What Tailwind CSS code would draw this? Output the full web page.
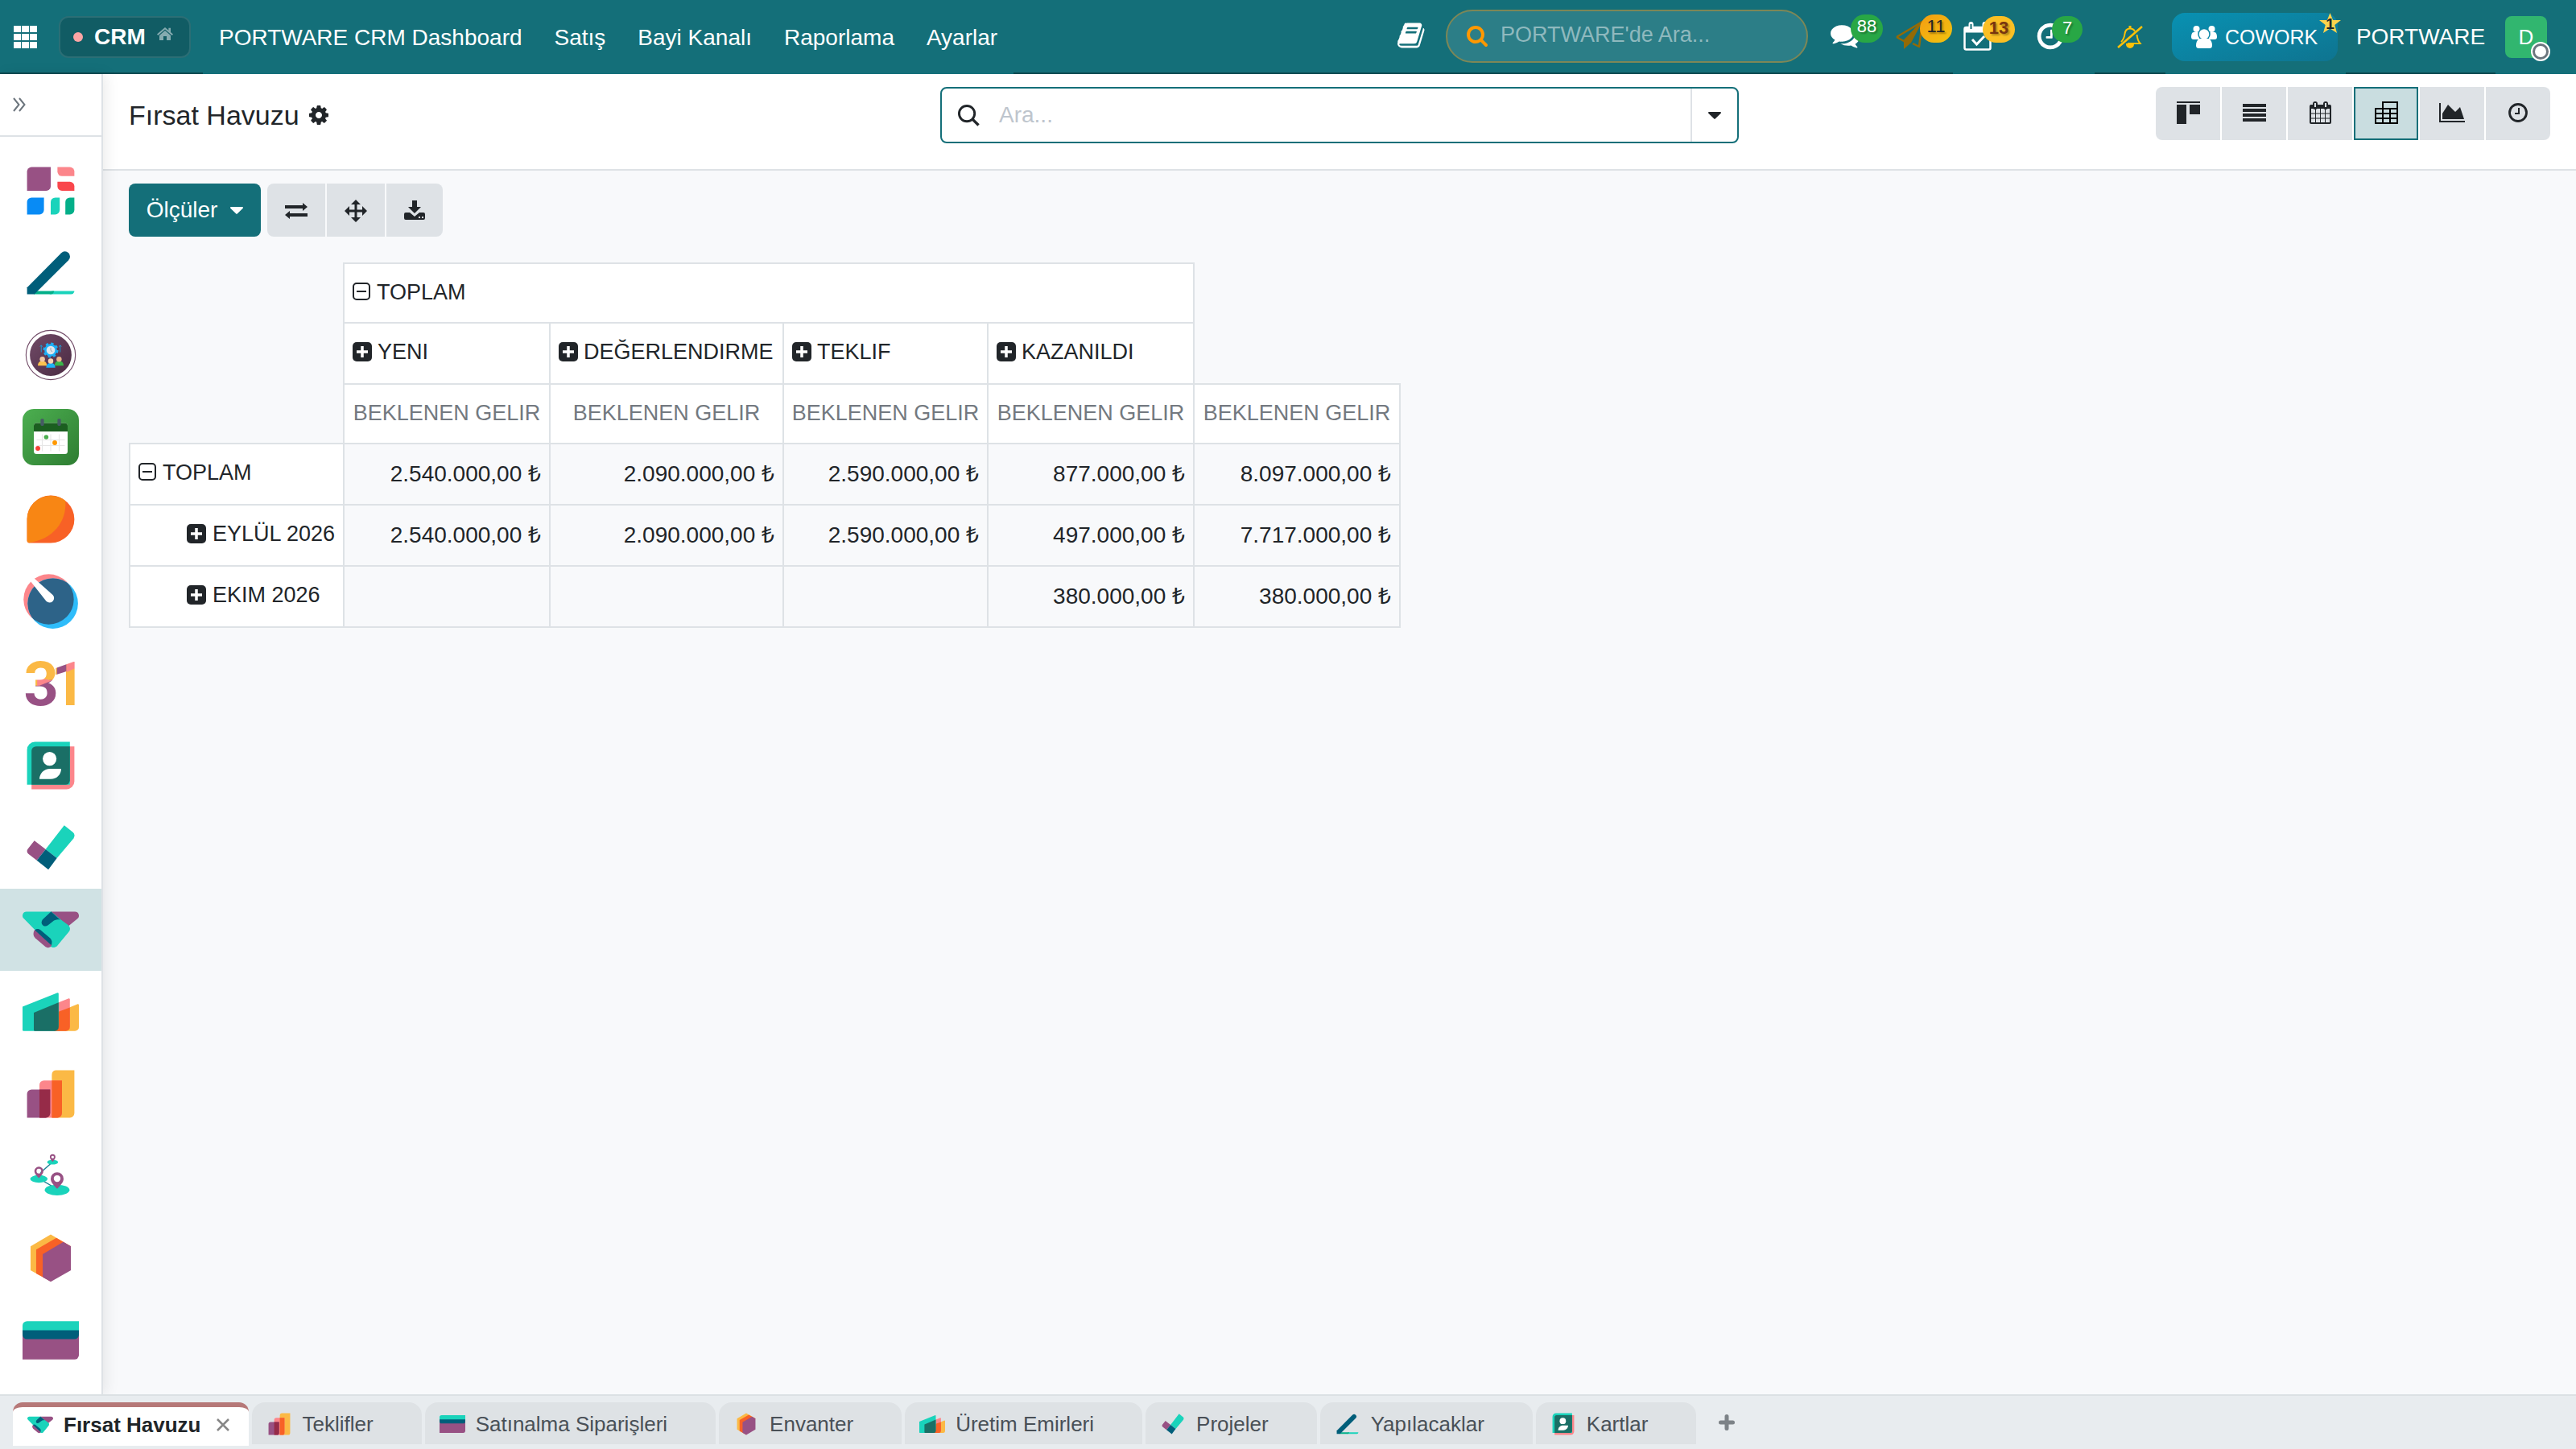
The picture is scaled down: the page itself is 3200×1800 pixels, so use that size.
<!DOCTYPE html>
<html lang="tr">
<head>
    <meta charset="UTF-8">
    <meta name="viewport" content="width=device-width, initial-scale=1.0">
    <title>Fırsat Havuzu - PORTWARE CRM</title>
    <script src="https://cdn.jsdelivr.net/npm/@tailwindcss/browser@4"></script>
    <style>
        body { font-family: 'Liberation Sans', Arial, sans-serif; }
    </style>
</head>
<body class="h-screen flex flex-col overflow-hidden bg-[#f8f9fb] text-[28px] leading-[42px] text-[#212529]">

    <!-- Icon sprite -->
    <svg class="absolute size-0" aria-hidden="true">
        <defs>
            <linearGradient id="g-green" x1="0" y1="0" x2="1" y2="1"><stop offset="0" stop-color="#4caf50"/><stop offset="1" stop-color="#2e7d32"/></linearGradient>
            <linearGradient id="g-plum" x1="0" y1="0" x2="1" y2="1"><stop offset="0" stop-color="#714b67"/><stop offset="1" stop-color="#4a2a42"/></linearGradient>
            <clipPath id="c-disc"><circle cx="23.200" cy="23.200" r="22.300"/></clipPath>
        </defs>
        <symbol id="app-dashboard" viewBox="0 0 50 50">
            <path fill="#985184" d="M8 4h17v17a4 4 0 0 1-4 4H4V8a4 4 0 0 1 4-4z"/>
            <path fill="#fc868b" d="M31 4h11a4 4 0 0 1 4 4v4H35a4 4 0 0 1-4-4z"/>
            <path fill="#f9464c" d="M31 17h11a4 4 0 0 1 4 4v4H35a4 4 0 0 1-4-4z"/>
            <path fill="#088bf5" d="M8 31h11v11a4 4 0 0 1-4 4H4V35a4 4 0 0 1 4-4z"/>
            <path fill="#1ad3bb" d="M29 31h4v11a4 4 0 0 1-4 4h-4V35a4 4 0 0 1 4-4z"/>
            <path fill="#03af89" d="M42 31h4v11a4 4 0 0 1-4 4h-4V35a4 4 0 0 1 4-4z"/>
        </symbol>
        <symbol id="app-todo" viewBox="0 0 50 50">
            <path fill="#1ad3bb" d="M26 41h20a3 3 0 0 1-3 3H24z"/>
            <path fill="#03af89" d="M10 41h18a3 3 0 0 1-3 3H10z"/>
            <path fill="#005e7a" d="M4 38 34.400 7.300a4.500 4.500 0 0 1 6.400 6.400L10.500 44H4z"/>
        </symbol>
        <symbol id="app-team" viewBox="0 0 50 50">
            <circle cx="25" cy="25" r="21.900" fill="#fff" stroke="#714b67" stroke-width=".8"/>
            <circle cx="25" cy="25" r="18.500" fill="url(#g-plum)"/>
            <circle cx="25" cy="20.700" r="5.600" fill="#1cb0f6"/>
            <circle cx="25" cy="20.700" r="6" fill="none" stroke="#1cb0f6" stroke-width="1.600" stroke-dasharray="2.400 2.300"/>
            <circle cx="25" cy="20.700" r="3.800" fill="#dfe6ec"/>
            <path d="M25 18.500v2.400l1.500 1.200" fill="none" stroke="#8b98a5" stroke-width=".6"/>
            <path d="M16.600 22.500v-6M15.600 17.600l1-1.300 1 1.300M33.400 22.500v-6M32.400 17.600l1-1.300 1 1.300" fill="none" stroke="#1c9fd8" stroke-width=".7"/>
            <path fill="#fcc34f" d="M13.600 34.500c0-3 1.600-4.200 4-4.200s4 1.200 4 4.200z"/>
            <path fill="#39b54a" d="M28.400 34.500c0-3 1.600-4.200 4-4.200s4 1.200 4 4.200z"/>
            <path fill="#1cb0f6" d="M21 36.300c0-3 1.600-4.200 4-4.200s4 1.200 4 4.200z"/>
            <circle cx="17.600" cy="28.800" r="2.300" fill="#f2c9a5"/>
            <circle cx="32.400" cy="28.800" r="2.300" fill="#e8b48c"/>
            <circle cx="25" cy="30.400" r="2.300" fill="#f7d3b5"/>
        </symbol>
        <symbol id="app-planner" viewBox="0 0 50 50">
            <rect width="50" height="50" rx="10" fill="url(#g-green)"/>
            <rect x="10" y="12.500" width="30" height="27.500" rx="2.500" fill="#fff"/>
            <path fill="#1b5e20" d="M12.500 12.500h25a2.500 2.500 0 0 1 2.500 2.500v5H10v-5a2.500 2.500 0 0 1 2.500-2.500z"/>
            <path d="M12.500 27.500h25M12.500 32.500h25M17.500 22.500v15M25 22.500v15M32.500 22.500v15" stroke="#e6e6e6" stroke-width=".8"/>
            <rect x="16" y="8.800" width="3" height="6.200" rx="1" fill="#455a64"/>
            <rect x="31" y="8.800" width="3" height="6.200" rx="1" fill="#455a64"/>
            <circle cx="21" cy="25" r="2" fill="#4caf50"/>
            <circle cx="28.600" cy="30" r="2.100" fill="#ff9800"/>
            <circle cx="13.600" cy="35" r="2.100" fill="#f44336"/>
        </symbol>
        <symbol id="app-discuss" viewBox="0 0 50 50">
            <path fill="#f86126" d="M4 25a21 21 0 1 1 21 21H6a2 2 0 0 1-2-2z"/>
            <path fill="#f88614" d="M38 8.600A21 21 0 0 0 4 25v19a2 2 0 0 0 1.700 1.900C27 43 39.500 27 38 8.600z"/>
        </symbol>
        <symbol id="app-timesheet" viewBox="0 0 50 50">
            <circle cx="23.200" cy="23.200" r="22.300" fill="#fc868b"/>
            <circle cx="26.900" cy="26.900" r="22.300" fill="#2ebcfa"/>
            <g clip-path="url(#c-disc)"><circle cx="26.900" cy="26.900" r="22.300" fill="#2d6388"/></g>
            <path fill="#fff" d="M6.500 6.500 10 4.200 26.800 19.200a4 4 0 0 1-5.800 5.700z"/>
        </symbol>
        <symbol id="app-contacts" viewBox="0 0 50 50">
            <path fill="#fc868b" d="M8 8h38v31a7 7 0 0 1-7 7H8z"/>
            <path fill="#1ad3bb" d="M11 4h31v38H4V11a7 7 0 0 1 7-7z"/>
            <path fill="#1a6f66" d="M12 8h30v30a4 4 0 0 1-4 4H8V12a4 4 0 0 1 4-4z"/>
            <circle cx="24" cy="19" r="6.100" fill="#fff"/>
            <path fill="#fff" d="M15 37c0-5 4-9.200 9.500-9.200h9.800c0 5-4 9.200-9.300 9.200z"/>
        </symbol>
        <symbol id="app-project" viewBox="0 0 50 50">
            <path fill="#1ad3bb" d="M37 5.200 44.600 11.200a4 4 0 0 1 .7 5.500L30.500 34.300 20.500 26.400z"/>
            <path fill="#985184" d="M10.500 18.800 20.500 26.400 12.600 36.200 5.200 30.500a3 3 0 0 1-.6-4.200z"/>
            <path fill="#005e7a" d="M20.500 26.400 30.500 34.300 22.900 44.500 12.600 36.200z"/>
        </symbol>
        <symbol id="app-crm" viewBox="0 0 50 50">
            <path fill="#985184" d="M25 9h21.500a3.500 3.500 0 0 1 2.200 6.200L38 24 28 20z"/>
            <path fill="#1ad3bb" d="M3.500 9H25.500L34 16 40.300 20.700a4 4 0 0 1 0 6.200L30.500 39.500a4.500 4.500 0 0 1-5.500 0L1.300 15.200A3.500 3.500 0 0 1 3.500 9z"/>
            <path fill="#1ad3bb" d="M20 38 31 14l9.500 7a4 4 0 0 1 .2 6.300L30.300 39.700a5 5 0 0 1-5.300.3z"/>
            <path fill="#005e7a" d="M25.300 9 33.500 16.200c-3-.8-5 .1-6.500 1.300l-4.600 3.600c-3 2.300-7.500-1.100-4.600-5.200z"/>
            <path fill="#985184" d="M10.900 25 26 38.300c-.5 2.600-3.500 3.400-6 1.500l-8.800-7.500c-2-2-2-5-.3-7.300z"/>
            <path fill="#005e7a" d="M10.900 25.300c1.600-1.500 3.800-1.200 5.200 0l8.500 7.200c1.600 1.600 2 4.200.8 6.100z"/>
        </symbol>
        <symbol id="app-mrp" viewBox="0 0 50 50">
            <path fill="#fbb945" d="M32 25 49 18a1 1 0 0 1 1 1v19.500a3.500 3.500 0 0 1-3.500 3.500H32z"/>
            <path fill="#fc868b" d="M32 16.600 41 13a1 1 0 0 1 1 1v24.500H32z"/>
            <path fill="#f86126" d="M32 24.800 42 21v17.500a3.500 3.500 0 0 1-3.500 3.500H30z"/>
            <path fill="#1ad3bb" d="M0 20.400 31 8a1 1 0 0 1 1 1v33H1a1 1 0 0 1-1-1z"/>
            <path fill="#f86126" d="M28 42h5v-6z"/>
            <path fill="#1a6f66" d="M10 25.700 32 16.600v21.900a3.500 3.500 0 0 1-3.500 3.500H11a1 1 0 0 1-1-1z"/>
        </symbol>
        <symbol id="app-sales" viewBox="0 0 50 50">
            <path fill="#fbb945" d="M29.500 4H46v38a4 4 0 0 1-4 4H26V8a4 4 0 0 1 3.500-4z"/>
            <path fill="#fc868b" d="M19 13h16v29a4 4 0 0 1-4 4H15V17a4 4 0 0 1 4-4z"/>
            <path fill="#f86126" d="M26 13h9v29a4 4 0 0 1-4 4h-5z"/>
            <path fill="#985184" d="M8 21h16.500v21a4 4 0 0 1-4 4H4V25a4 4 0 0 1 4-4z"/>
            <path fill="#962b48" d="M15 21h9.500v21a4 4 0 0 1-4 4H15z"/>
        </symbol>
        <symbol id="app-map" viewBox="0 0 50 50">
            <path d="M26 13 16 22M16 28l12 7" stroke="#1b7f93" stroke-width="1"/>
            <ellipse cx="26.700" cy="12.600" rx="4.800" ry="2.100" fill="#1ad3bb"/>
            <ellipse cx="14.500" cy="27.500" rx="7.700" ry="3.400" fill="#1ad3bb"/>
            <ellipse cx="30.700" cy="37.400" rx="11" ry="4.800" fill="#1ad3bb"/>
            <path fill="#985184" fill-rule="evenodd" d="M26.700 12.400C25 10.400 24.200 9.300 24.200 8.100a2.500 2.500 0 0 1 5 0c0 1.200-.8 2.300-2.500 4.300zm0-3.100a1.200 1.200 0 1 0 0-2.400 1.200 1.200 0 0 0 0 2.400z"/>
            <path fill="#985184" fill-rule="evenodd" d="M14.500 26.800c-2.600-2.600-4-4.400-4-6.200a4 4 0 0 1 8 0c0 1.800-1.400 3.600-4 6.200zm0-4.200a2.100 2.100 0 1 0 0-4.200 2.100 2.100 0 0 0 0 4.200z"/>
            <path fill="#985184" fill-rule="evenodd" d="M30.700 36.200c-3.600-3.600-5.700-6-5.700-8.900a5.700 5.700 0 0 1 11.400 0c0 2.900-2.100 5.300-5.700 8.900zm0-6a3 3 0 1 0 0-6 3 3 0 0 0 0 6z"/>
        </symbol>
        <symbol id="app-stock" viewBox="0 0 50 50">
            <path fill="#fbb945" d="M25 4 42.900 14.400 25 45.600 7.100 35.700V14.400z"/>
            <path fill="#f86126" d="M30 7 42.900 14.400 25 45.600 12.100 38.500V17.300z"/>
            <path fill="#985184" d="M36.200 10.600 42.900 14.400V35.700L25 45.900 17.900 41.700V21.400z"/>
        </symbol>
        <symbol id="app-purchase" viewBox="0 0 50 50">
            <path fill="#985184" d="M0 16h50v22a4 4 0 0 1-4 4H0z"/>
            <path fill="#1ad3bb" d="M4 8h46v9H0v-5a4 4 0 0 1 4-4z"/>
            <path fill="#005e7a" d="M0 16h50v4a4 4 0 0 1-4 4H4a4 4 0 0 1-4-4z"/>
        </symbol>

        <symbol id="i-search" viewBox="0 0 28 28"><circle cx="11.500" cy="11.500" r="10" fill="none" stroke="currentColor" stroke-width="3"/><path d="m18.500 18.500 8 8" stroke="currentColor" stroke-width="3.500"/></symbol>
        <symbol id="i-search-bold" viewBox="0 0 1664 1664"><path fill="currentColor" d="M1152 704q0-185-131.500-316.500t-316.500-131.500-316.500 131.500-131.500 316.500 131.500 316.500 316.500 131.500 316.500-131.500 131.500-316.500zm512 832q0 52-38 90t-90 38q-54 0-90-38l-343-342q-179 124-399 124-143 0-273.500-55.500t-225-150-150-225-55.500-273.500 55.500-273.500 150-225 225-150 273.500-55.500 273.500 55.500 225 150 150 225 55.500 273.500q0 220-124 399l343 343q37 37 37 90z"/></symbol>
        <symbol id="i-caret" viewBox="0 0 16 9"><path fill="currentColor" d="M1 0h14a1 1 0 0 1 .7 1.700L8.700 8.600a1 1 0 0 1-1.400 0L.3 1.700A1 1 0 0 1 1 0z"/></symbol>
        <symbol id="i-plus" viewBox="0 0 24 24"><rect width="24" height="24" rx="5" fill="currentColor"/><path d="M12 5v14M5 12h14" stroke="#fff" stroke-width="3.500"/></symbol>
        <symbol id="i-minus" viewBox="0 0 22 22"><rect x="1" y="1" width="20" height="20" rx="4" fill="none" stroke="currentColor" stroke-width="2"/><path d="M5 11h12" stroke="currentColor" stroke-width="2"/></symbol>
    </svg>

    <!-- Top bar -->
    <header class="flex h-[92px] shrink-0 bg-[#146f79] text-white">
        <div class="flex items-center w-[252px] pl-[17px] gap-[27px] pt-[2px] border-b-2 border-[#0e4b52]">
            <button aria-label="Uygulamalar">
                <svg class="block w-[29px] h-7" viewBox="0 0 29 28" fill="#fff"><path d="M0 0h9v8H0zM10 0h9v8h-9zM20 0h9v8h-9zM0 10h9v8H0zM10 10h9v8h-9zM20 10h9v8h-9zM0 20h9v8H0zM10 20h9v8h-9zM20 20h9v8h-9z"/></svg>
            </button>
            <a href="#" class="flex items-center w-[164px] h-[52px] pl-4 gap-[14px] rounded-xl border-2 border-[#2b6e75] bg-[#115c64] font-bold">
                <span class="size-3 rounded-full bg-[#fca5a5]"></span>
                <span>CRM</span>
                <svg class="w-5 h-4 mb-2" viewBox="0 0 20 16" fill="#85abb0"><path d="M10 0 0 8.500l1.300 1.500L10 2.600l8.700 7.400L20 8.500l-3-2.600V.8h-2.600v2.900z"/><path d="M10 4 3 10v6h5v-5h4v5h5v-6z"/></svg>
            </a>
        </div>
        <nav class="flex items-center pt-[2px]">
            <a href="#" class="px-5">PORTWARE CRM Dashboard</a>
            <a href="#" class="px-5">Satış</a>
            <a href="#" class="px-5">Bayi Kanalı</a>
            <a href="#" class="px-5">Raporlama</a>
            <a href="#" class="px-5">Ayarlar</a>
        </nav>
        <div class="flex flex-1 justify-end pr-[36px] border-b-2 border-[#0e4b52]">
            <button class="mr-6 pb-[2px]" aria-label="Bilgi Bankası">
                <svg class="block w-9 h-9" viewBox="0 0 1792 1792" fill="#fff"><path d="M1639 478q40 57 18 129l-275 906q-19 64-76.500 107.500t-122.500 43.500h-923q-77 0-148.500-53.500t-99.500-131.500q-24-67-2-127 0-4 3-27t4-37q1-8-3-21.500t-3-19.500q2-11 8-21t16.500-23.500 16.500-23.500q23-38 45-91.500t30-91.500q3-10 .5-30t-.5-28q3-11 17-28t17-23q21-36 42-92t25-90q1-9-2.500-32t.5-28q4-13 22-30.500t22-22.500q19-26 42.500-84.500t27.500-96.500q1-8-3-25.500t-2-26.500q2-8 9-18t18-23 17-21q8-12 16.500-30.500t15-35 16-36 19.500-32 26.500-23.500 36-11.500 47.500 5.500l-1 3q38-9 51-9h761q74 0 114 56t18 130l-274 906q-36 119-71.500 153.500t-128.500 34.500h-869q-27 0-38 15-11 16-1 43 24 70 144 70h923q29 0 56-15.500t35-41.500l300-987q7-22 5-57 38 15 59 43zm-1064 2q-4 13 2 22.500t20 9.500h608q13 0 25.500-9.500t16.500-22.500l21-64q4-13-2-22.500t-20-9.500h-608q-13 0-25.500 9.500t-16.500 22.500zm-83 256q-4 13 2 22.500t20 9.500h608q13 0 25.500-9.500t16.500-22.500l21-64q4-13-2-22.500t-20-9.500h-608q-13 0-25.500 9.500t-16.500 22.500z"/></svg>
            </button>
            <label class="flex items-center self-center w-[450px] h-[66px] px-6 gap-4 rounded-[33px] border-2 border-[#7d8757] bg-[#2c7e87]">
                <svg class="size-[26px] text-[#ff9800]"><use href="#i-search-bold"/></svg>
                <input type="text" placeholder="PORTWARE'de Ara..." class="flex-1 min-w-0 pb-1 bg-transparent text-[27px] placeholder:text-[#8fb9be] outline-none" aria-label="Genel arama">
            </label>
            <button class="relative ml-[28px] w-9 pb-[2px]" aria-label="Mesajlar">
                <svg class="block w-9 h-9" viewBox="0 0 1792 1792" fill="#fff"><path d="M1408 768q0 139-94 257t-256.500 186.500-353.500 68.500q-86 0-176-16-124 88-278 128-36 9-86 16h-3q-11 0-20.500-8t-11.500-21q-1-3-1-6.500t.5-6.500 2-6l2.500-5 3.500-5.500 4-5 4.500-5 4-4.500q5-6 23-25t26-29.500 22.500-29 25-38.500 20.500-44q-124-72-195-177t-71-224q0-139 94-257t256.500-186.500 353.500-68.500 353.500 68.500 256.500 186.500 94 257zm384 256q0 120-71 224.500t-195 176.500q10 24 20.500 44t25 38.500 22.500 29 26 29.500 23 25q1 1 4 4.500t4.500 5 4 5 3.500 5.500l2.500 5 2 6 .5 6.500-1 6.500q-3 14-13 22t-22 7q-50-7-86-16-154-40-278-128-90 16-176 16-271 0-472-132 58 4 88 4 161 0 309-45t264-129q125-92 192-212t67-254q0-77-23-152 129 71 204 178t75 230z"/></svg>
                <span class="absolute left-[25px] top-[18px] w-10 h-[35px] rounded-full bg-[#28a745] text-[22px] leading-[30px] text-shadow-[2px_2px_2px_rgba(0,0,0,0.3)]">88</span>
            </button>
            <button class="relative ml-[44px] w-9 pb-[2px]" aria-label="Gönderiler">
                <svg class="block w-9 h-9" viewBox="0 0 36 36" fill="none"><path d="M2 20 34 1 30 32 22 28" stroke="#946a05" stroke-width="2.500" stroke-linejoin="round"/><path d="M2 20 11 25 34 1" stroke="#946a05" stroke-width="2.500" stroke-linejoin="round"/><path d="M34 1 11 25v10l9-8z" fill="#946a05"/></svg>
                <span class="absolute left-[31px] top-[18px] w-10 h-[35px] rounded-full bg-linear-to-br from-[#f39c12] to-[#f1c40f] text-[22px] leading-[30px] text-[#212529] text-shadow-[2px_2px_2px_rgba(0,0,0,0.3)]">11</span>
            </button>
        </div>
        <div class="flex w-[176px]">
            <button class="relative w-[92px] pl-[13px] pb-[2px]" aria-label="Takvim">
                <svg class="block w-9 h-9" viewBox="0 0 36 36" fill="none" stroke="#fff"><rect x="1.500" y="7" width="32" height="27.500" rx="2" stroke-width="2.500"/><path d="M2 7h31v6H2z" fill="#fff"/><path d="M9.500 3v6M26.500 3v6" stroke-width="6" stroke-linecap="round"/><path d="M9.500 3v6M26.500 3v6" stroke="#146f79" stroke-width="2"/><path d="m11 22 5.500 6L26 18" stroke-width="3"/></svg>
                <span class="absolute left-[37px] top-5 w-10 h-[33px] rounded-full bg-[#fbbf24] text-[22px] leading-[30px] font-bold text-[#78350f] text-shadow-[2px_2px_2px_rgba(0,0,0,0.3)]">13</span>
            </button>
            <button class="relative w-[84px] pl-[10px] pb-[2px]" aria-label="Aktiviteler">
                <svg class="block w-[38px] h-[38px]" viewBox="0 0 1792 1792" fill="#fff"><path d="M1024 544v448q0 14-9 23t-23 9h-320q-14 0-23-9t-9-23v-64q0-14 9-23t23-9h224v-352q0-14 9-23t23-9h64q14 0 23 9t9 23zm416 352q0-148-73-273t-198-198-273-73-273 73-198 198-73 273 73 273 198 198 273 73 273-73 198-198 73-273zm224 0q0 209-103 385.500t-279.500 279.500-385.500 103-385.500-103-279.500-279.500-103-385.500 103-385.500 279.500-279.500 385.500-103 385.500 103 279.500 279.500 103 385.500z"/></svg>
                <span class="absolute left-[31px] top-5 w-[38px] h-[33px] rounded-full bg-[#28a745] text-[22px] leading-[30px] text-shadow-[2px_2px_2px_rgba(0,0,0,0.3)]">7</span>
            </button>
        </div>
        <button class="flex items-center justify-center w-[88px] pt-[2px] border-b-2 border-[#0e4b52]" aria-label="Bildirimler kapalı">
            <svg class="w-8 h-7" viewBox="0 0 32 28" fill="none" stroke="#ffc107" stroke-width="2"><path d="M5 20c3-3 4-6 4.500-10C10 6 12.500 3.500 16 3.500c3 0 5 1.300 6 3.500M24.500 11c.4 4.500 1.500 8 4 11H13"/><path d="M16 0v3" stroke-width="3"/><path d="M1 27 31 1" stroke-width="2.500"/><path d="M12 23a4 4 0 0 0 8 0z" fill="#ffc107"/></svg>
        </button>
        <div class="flex items-center w-[224px] pl-2">
            <button class="relative flex items-center w-[206px] h-[60px] pl-6 gap-[10px] rounded-2xl bg-linear-to-br from-[#0891b2] to-[#0e7490] text-[25px]">
                <svg class="w-8 h-7" viewBox="0 0 32 28" fill="#fff"><circle cx="6.500" cy="4" r="4"/><circle cx="25.500" cy="4" r="4"/><path d="M3 8h7v9H3a3 3 0 0 1-3-3c0-3 1-6 3-6zM29 8h-7v9h7a3 3 0 0 0 3-3c0-3-1-6-3-6z"/><circle cx="16" cy="10.500" r="7" stroke="#0b87a7" stroke-width="1.500"/><path d="M10 16h12c3 2 4 5 4 8.500a3.500 3.500 0 0 1-3.500 3.500h-13A3.500 3.500 0 0 1 6 24.500C6 21 7 18 10 16z"/></svg>
                COWORK
                <span class="absolute left-[183px] top-0 w-[27px] h-[27px]">
                    <svg class="w-[27px] h-[27px]" viewBox="0 0 27 27" fill="#fcd34d"><path d="m13.500 0 3.600 9H27l-7.700 6 2.700 10-8.500-5.600L5 25l2.700-10L0 9h9.900z"/></svg>
                    <span class="absolute inset-0 text-[19px] leading-[28px] font-bold text-[#212529] text-center">1</span>
                </span>
            </button>
        </div>
        <button class="w-[186px] pt-[2px] border-b-2 border-[#0e4b52]">PORTWARE</button>
        <div class="flex items-center w-[100px] pl-3">
            <button class="relative size-[52px] rounded-lg bg-[#31b66f] text-[26px]">D
                <span class="absolute left-8 top-8 size-6 rounded-full border-2 border-white bg-[#6c757d] p-[3px]"><span class="block size-full rounded-full bg-white"></span></span>
            </button>
        </div>
    </header>

    <div class="flex flex-1 min-h-0">
        <!-- App sidebar -->
        <aside class="relative z-10 w-[128px] shrink-0 border-r-2 border-[#dee2e6] bg-white shadow-[4px_0_16px_rgba(0,0,0,0.08)]">
            <button class="flex items-center w-full h-[78px] pl-4 border-b-2 border-[#dee2e6]" aria-label="Genişlet">
                <svg class="w-4 h-[18px]" viewBox="0 0 16 18" fill="none" stroke="#6c757d" stroke-width="2"><path d="m1 1 6.500 8L1 17M8 1l6.500 8L8 17"/></svg>
            </button>
            <nav class="flex flex-col pt-4">
                <a href="#" class="flex items-center justify-center h-[102px]" aria-label="Panolar"><svg class="size-[70px]"><use href="#app-dashboard"/></svg></a>
                <a href="#" class="flex items-center justify-center h-[102px]" aria-label="Yapılacaklar"><svg class="size-[70px]"><use href="#app-todo"/></svg></a>
                <a href="#" class="flex items-center justify-center h-[102px]" aria-label="Ekip"><svg class="size-[70px]"><use href="#app-team"/></svg></a>
                <a href="#" class="flex items-center justify-center h-[102px]" aria-label="Planlayıcı"><svg class="size-[70px]"><use href="#app-planner"/></svg></a>
                <a href="#" class="flex items-center justify-center h-[102px]" aria-label="Mesajlaşma"><svg class="size-[70px]"><use href="#app-discuss"/></svg></a>
                <a href="#" class="flex items-center justify-center h-[102px]" aria-label="Zaman Çizelgesi"><svg class="size-[70px]"><use href="#app-timesheet"/></svg></a>
                <a href="#" class="flex items-center justify-center h-[102px]" aria-label="Takvim">
                    <svg class="size-[70px]" viewBox="0 0 50 50">
                        <pattern id="p-calendar" width="60" height="60" patternUnits="userSpaceOnUse">
                            <rect width="60" height="60" fill="#fbb945"/>
                            <path fill="#985184" d="M0 27h13l11-5h6v28H0z"/>
                            <path fill="#fc868b" d="M13 21h7l6 1.500-11 4.500h-2z"/>
                            <path fill="#985184" d="M30.500 0H39v14l-8.500 6z"/>
                            <path fill="#fc868b" d="M39 0h11v10l-11 5z"/>
                        </pattern>
                        <text x="1 25" y="44" font-family="Roboto, 'Liberation Sans', sans-serif" font-weight="700" font-size="54" fill="url(#p-calendar)">31</text>
                    </svg>
                </a>
                <a href="#" class="flex items-center justify-center h-[102px]" aria-label="Kontaklar"><svg class="size-[70px]"><use href="#app-contacts"/></svg></a>
                <a href="#" class="flex items-center justify-center h-[102px]" aria-label="Projeler"><svg class="size-[70px]"><use href="#app-project"/></svg></a>
                <a href="#" class="flex items-center justify-center h-[102px] bg-[#d0e2e4]" aria-label="CRM"><svg class="size-[70px]"><use href="#app-crm"/></svg></a>
                <a href="#" class="flex items-center justify-center h-[102px]" aria-label="Üretim"><svg class="size-[70px]"><use href="#app-mrp"/></svg></a>
                <a href="#" class="flex items-center justify-center h-[102px]" aria-label="Satış"><svg class="size-[70px]"><use href="#app-sales"/></svg></a>
                <a href="#" class="flex items-center justify-center h-[102px]" aria-label="Saha"><svg class="size-[70px]"><use href="#app-map"/></svg></a>
                <a href="#" class="flex items-center justify-center h-[102px]" aria-label="Envanter"><svg class="size-[70px]"><use href="#app-stock"/></svg></a>
                <a href="#" class="flex items-center justify-center h-[102px]" aria-label="Satınalma"><svg class="size-[70px]"><use href="#app-purchase"/></svg></a>
            </nav>
        </aside>

        <main class="flex-1 min-w-0">
            <!-- Control panel -->
            <div class="grid grid-cols-3 gap-4 h-[120px] px-8 pt-4 border-b-2 border-[#dee2e6] bg-white">
                <div class="flex items-center gap-[10px] h-[70px]">
                    <h1 class="text-[34px]">Fırsat Havuzu</h1>
                    <button aria-label="Eylemler">
                        <svg class="block size-7" viewBox="0 0 1792 1792" fill="#212529"><path d="M1152 896q0-106-75-181t-181-75-181 75-75 181 75 181 181 75 181-75 75-181zm512-109v222q0 12-8 23t-20 13l-185 28q-19 54-39 91 35 50 107 138 10 12 10 25t-9 23q-27 37-99 108t-94 71q-12 0-26-9l-138-108q-44 23-91 38-16 136-29 186-7 28-36 28h-222q-14 0-24.500-8.500t-11.500-21.500l-28-184q-49-16-90-37l-141 107q-10 9-25 9-14 0-25-11-126-114-165-168-7-10-7-23 0-12 8-23 15-21 51-66.500t54-70.500q-27-50-41-99l-183-27q-13-2-21-12.500t-8-23.500v-222q0-12 8-23t19-13l186-28q14-46 39-92-40-57-107-138-10-12-10-24 0-10 9-23 26-36 98.500-107.500t94.500-71.500q13 0 26 10l138 107q44-23 91-38 16-136 29-186 7-28 36-28h222q14 0 24.500 8.500t11.500 21.500l28 184q49 16 90 37l142-107q9-9 24-9 13 0 25 10 129 119 165 170 7 8 7 22 0 12-8 23-15 21-51 66.500t-54 70.500q26 50 41 98l183 28q13 2 21 12.500t8 23.500z"/></svg>
                    </button>
                </div>
                <div class="flex items-center h-[70px] rounded-lg border-2 border-[#146f79]">
                    <label class="flex flex-1 items-center pl-5 gap-6">
                        <svg class="size-[27px]"><use href="#i-search"/></svg>
                        <input type="text" placeholder="Ara..." class="flex-1 bg-transparent placeholder:text-[#bec5cd] outline-none" aria-label="Ara">
                    </label>
                    <button class="flex items-center justify-center w-[58px] h-full border-l-2 border-[#dee2e6]" aria-label="Filtreler"><svg class="w-4 h-[9px]"><use href="#i-caret"/></svg></button>
                </div>
                <div class="flex justify-end gap-[2px] h-[66px]">
                    <button class="flex items-center justify-center w-20 pb-[2px] rounded-l-lg bg-[#dee2e6]" aria-label="Kanban">
                        <svg class="w-[29px] h-7" viewBox="0 0 29 28" fill="#212529"><path d="M0 0h29v2H0zM0 4h12v24H0zM16 4h13v12H16z"/></svg>
                    </button>
                    <button class="flex items-center justify-center w-20 pb-[2px] bg-[#dee2e6]" aria-label="Liste">
                        <svg class="w-[29px] h-[22px]" viewBox="0 0 29 22" fill="#212529"><path d="M0 0h29v4H0zM0 6h29v4H0zM0 12h29v4H0zM0 18h29v4H0z"/></svg>
                    </button>
                    <button class="flex items-center justify-center w-20 pb-[2px] bg-[#dee2e6]" aria-label="Takvim">
                        <svg class="w-[27px] h-7" viewBox="0 0 27 28"><rect x="1" y="5" width="25" height="22" rx="1" fill="#dee2e6" stroke="#212529" stroke-width="2"/><path d="M1 4h25v5H1z" fill="#212529"/><path d="M7.500 9v18M13.500 9v18M19.500 9v18M1 15h25M1 21h25" stroke="#212529" stroke-width="1"/><path d="M7 3v4M20 3v4" stroke="#212529" stroke-width="6" stroke-linecap="round"/><path d="M7 2v5M20 2v5" stroke="#dee2e6" stroke-width="2"/></svg>
                    </button>
                    <button class="flex items-center justify-center w-20 pb-[2px] border-2 border-[#146f79] bg-[#c9dde0]" aria-label="Pivot">
                        <svg class="w-[29px] h-7" viewBox="0 0 29 28" fill="none" stroke="#000" stroke-width="2"><path d="M10 9V1h18v26H1V9h27M1 15h27M1 21h27M10 9v18M19 9v18"/></svg>
                    </button>
                    <button class="flex items-center justify-center w-20 pb-[2px] bg-[#dee2e6]" aria-label="Grafik">
                        <svg class="w-8 h-6" viewBox="0 0 32 24" fill="#212529"><path d="M0 0h2v22h30v2H0z"/><path d="M4 13 11 2l9 9 6-6 5 15H4z"/></svg>
                    </button>
                    <button class="flex items-center justify-center w-20 pb-[2px] rounded-r-lg bg-[#dee2e6]" aria-label="Aktivite">
                        <svg class="size-6" viewBox="0 0 24 24" fill="none" stroke="#212529"><circle cx="12" cy="12" r="10.500" stroke-width="2.800"/><path d="M13 6v7H8" stroke-width="2"/></svg>
                    </button>
                </div>
            </div>

            <!-- Pivot toolbar -->
            <div class="flex gap-2 px-8 pt-4">
                <button class="flex items-center justify-center gap-4 w-[164px] h-[66px] rounded-lg bg-[#146f79] text-white">Ölçüler <svg class="w-4 h-[9px]"><use href="#i-caret"/></svg></button>
                <div class="flex gap-[2px]">
                    <button class="flex items-center justify-center w-[72px] pt-[2px] rounded-l-lg bg-[#dee2e6]" aria-label="Ekseni çevir">
                        <svg class="w-7 h-5" viewBox="0 0 28 20" fill="#212529"><path d="M0 3h22V0l6 5-6 5V7H0zM28 13H6v-3l-6 5 6 5v-3h22z"/></svg>
                    </button>
                    <button class="flex items-center justify-center w-[72px] pt-[2px] bg-[#dee2e6]" aria-label="Tümünü genişlet">
                        <svg class="size-7" viewBox="0 0 28 28" fill="#212529"><path d="m14 0 6 6h-4.500v6.500H22V8l6 6-6 6v-4.500h-6.500V22H20l-6 6-6-6h4.500v-6.500H6V20l-6-6 6-6v4.500h6.500V6H8z"/></svg>
                    </button>
                    <button class="flex items-center justify-center w-[70px] rounded-r-lg bg-[#dee2e6]" aria-label="xlsx indir">
                        <svg class="w-[26px] h-6" viewBox="0 0 26 24" fill="#212529"><path d="M10 0h6v8h5l-8 8-8-8h5z"/><path d="M2 15h5l6 5 6-5h5a2 2 0 0 1 2 2v5a2 2 0 0 1-2 2H2a2 2 0 0 1-2-2v-5a2 2 0 0 1 2-2z"/><path d="M18 20h2v2h-2zM22 20h2v2h-2z" fill="#dee2e6"/></svg>
                    </button>
                </div>
            </div>

            <!-- Pivot table -->
            <div class="px-8 pt-8">
                <table class="table-fixed w-[1580px] border-collapse text-[#212529]">
                    <colgroup>
                        <col class="w-[266px]"><col class="w-[256px]"><col class="w-[290px]"><col class="w-[254px]"><col class="w-[256px]"><col class="w-[256px]">
                    </colgroup>
                    <thead class="text-left text-[27px]">
                        <tr class="h-[74px]">
                            <td rowspan="3"></td>
                            <th colspan="4" class="border-2 border-[#dee2e6] bg-white px-[10px] pb-[2px] font-normal"><span class="flex items-center gap-2"><svg class="size-[22px] mb-[2px]"><use href="#i-minus"/></svg>TOPLAM</span></th>
                            <td rowspan="2"></td>
                        </tr>
                        <tr class="h-[76px]">
                            <th class="border-2 border-[#dee2e6] bg-white px-[10px] pb-1 font-normal"><span class="flex items-center gap-[7px]"><svg class="size-6"><use href="#i-plus"/></svg>YENI</span></th>
                            <th class="border-2 border-[#dee2e6] bg-white px-[10px] pb-1 font-normal"><span class="flex items-center gap-[7px]"><svg class="size-6"><use href="#i-plus"/></svg>DEĞERLENDIRME</span></th>
                            <th class="border-2 border-[#dee2e6] bg-white px-[10px] pb-1 font-normal"><span class="flex items-center gap-[7px]"><svg class="size-6"><use href="#i-plus"/></svg>TEKLIF</span></th>
                            <th class="border-2 border-[#dee2e6] bg-white px-[10px] pb-1 font-normal"><span class="flex items-center gap-[7px]"><svg class="size-6"><use href="#i-plus"/></svg>KAZANILDI</span></th>
                        </tr>
                        <tr class="h-[74px] text-center text-[#737980]">
                            <th class="border-2 border-[#dee2e6] bg-white pb-[2px] font-normal whitespace-nowrap">BEKLENEN GELIR</th>
                            <th class="border-2 border-[#dee2e6] bg-white pb-[2px] font-normal whitespace-nowrap">BEKLENEN GELIR</th>
                            <th class="border-2 border-[#dee2e6] bg-white pb-[2px] font-normal whitespace-nowrap">BEKLENEN GELIR</th>
                            <th class="border-2 border-[#dee2e6] bg-white pb-[2px] font-normal whitespace-nowrap">BEKLENEN GELIR</th>
                            <th class="border-2 border-[#dee2e6] bg-white pb-[2px] font-normal whitespace-nowrap">BEKLENEN GELIR</th>
                        </tr>
                    </thead>
                    <tbody class="text-right">
                        <tr class="h-[76px]">
                            <th class="border-2 border-[#dee2e6] bg-white px-[10px] pb-1 font-normal text-[27px]"><span class="flex items-center gap-2"><svg class="size-[22px] mb-[2px]"><use href="#i-minus"/></svg>TOPLAM</span></th>
                            <td class="border-2 border-[#dee2e6] px-[10px]">2.540.000,00 ₺</td>
                            <td class="border-2 border-[#dee2e6] px-[10px]">2.090.000,00 ₺</td>
                            <td class="border-2 border-[#dee2e6] px-[10px]">2.590.000,00 ₺</td>
                            <td class="border-2 border-[#dee2e6] px-[10px]">877.000,00 ₺</td>
                            <td class="border-2 border-[#dee2e6] px-[10px]">8.097.000,00 ₺</td>
                        </tr>
                        <tr class="h-[76px]">
                            <th class="border-2 border-[#dee2e6] bg-white pl-[70px] pb-1 font-normal text-[27px]"><span class="flex items-center gap-2 whitespace-nowrap"><svg class="size-6"><use href="#i-plus"/></svg>EYLÜL 2026</span></th>
                            <td class="border-2 border-[#dee2e6] px-[10px]">2.540.000,00 ₺</td>
                            <td class="border-2 border-[#dee2e6] px-[10px]">2.090.000,00 ₺</td>
                            <td class="border-2 border-[#dee2e6] px-[10px]">2.590.000,00 ₺</td>
                            <td class="border-2 border-[#dee2e6] px-[10px]">497.000,00 ₺</td>
                            <td class="border-2 border-[#dee2e6] px-[10px]">7.717.000,00 ₺</td>
                        </tr>
                        <tr class="h-[76px]">
                            <th class="border-2 border-[#dee2e6] bg-white pl-[70px] pb-1 font-normal text-[27px]"><span class="flex items-center gap-2 whitespace-nowrap"><svg class="size-6"><use href="#i-plus"/></svg>EKIM 2026</span></th>
                            <td class="border-2 border-[#dee2e6]"></td>
                            <td class="border-2 border-[#dee2e6]"></td>
                            <td class="border-2 border-[#dee2e6]"></td>
                            <td class="border-2 border-[#dee2e6] px-[10px]">380.000,00 ₺</td>
                            <td class="border-2 border-[#dee2e6] px-[10px]">380.000,00 ₺</td>
                        </tr>
                    </tbody>
                </table>
            </div>
        </main>
    </div>

    <!-- Bottom tabs -->
    <footer class="relative z-20 flex shrink-0 h-[68px] pl-4 pt-2 gap-1 border-t-2 border-[#dce1e4] bg-[#e8ecef] text-[26px] text-[#495057]">
        <div class="flex items-center h-[54px] px-[18px] pb-1 gap-[13px] rounded-t-xl border-t-6 border-[#b67878] bg-white font-bold text-[#212529]">
            <svg class="size-8"><use href="#app-crm"/></svg><a href="#">Fırsat Havuzu</a>
            <button class="flex items-center justify-center w-7" aria-label="Sekmeyi kapat"><svg class="size-4" viewBox="0 0 16 16" stroke="#868686" stroke-width="2.500"><path d="m1 1 14 14M15 1 1 15"/></svg></button>
        </div>
        <a href="#" class="flex items-center h-[52px] pl-[18px] pr-[60px] pt-[2px] gap-[13px] rounded-t-2xl bg-[#dee2e5]"><svg class="size-8"><use href="#app-sales"/></svg>Teklifler</a>
        <a href="#" class="flex items-center h-[52px] pl-[18px] pr-[60px] pt-[2px] gap-[13px] rounded-t-2xl bg-[#dee2e5]"><svg class="size-8"><use href="#app-purchase"/></svg>Satınalma Siparişleri</a>
        <a href="#" class="flex items-center h-[52px] pl-[18px] pr-[60px] pt-[2px] gap-[13px] rounded-t-2xl bg-[#dee2e5]"><svg class="size-8"><use href="#app-stock"/></svg>Envanter</a>
        <a href="#" class="flex items-center h-[52px] pl-[18px] pr-[60px] pt-[2px] gap-[13px] rounded-t-2xl bg-[#dee2e5]"><svg class="size-8"><use href="#app-mrp"/></svg>Üretim Emirleri</a>
        <a href="#" class="flex items-center h-[52px] pl-[18px] pr-[60px] pt-[2px] gap-[13px] rounded-t-2xl bg-[#dee2e5]"><svg class="size-8"><use href="#app-project"/></svg>Projeler</a>
        <a href="#" class="flex items-center h-[52px] pl-[18px] pr-[60px] pt-[2px] gap-[13px] rounded-t-2xl bg-[#dee2e5]"><svg class="size-8"><use href="#app-todo"/></svg>Yapılacaklar</a>
        <a href="#" class="flex items-center h-[52px] pl-[18px] pr-[60px] pt-[2px] gap-[13px] rounded-t-2xl bg-[#dee2e5]"><svg class="size-8"><use href="#app-contacts"/></svg>Kartlar</a>
        <button class="flex items-center h-[50px] pl-6" aria-label="Yeni sekme"><svg class="size-5" viewBox="0 0 20 20" stroke="#7c8287" stroke-width="5" stroke-linecap="round"><path d="M10 2.500v15M2.500 10h15"/></svg></button>
    </footer>
</body>
</html>
